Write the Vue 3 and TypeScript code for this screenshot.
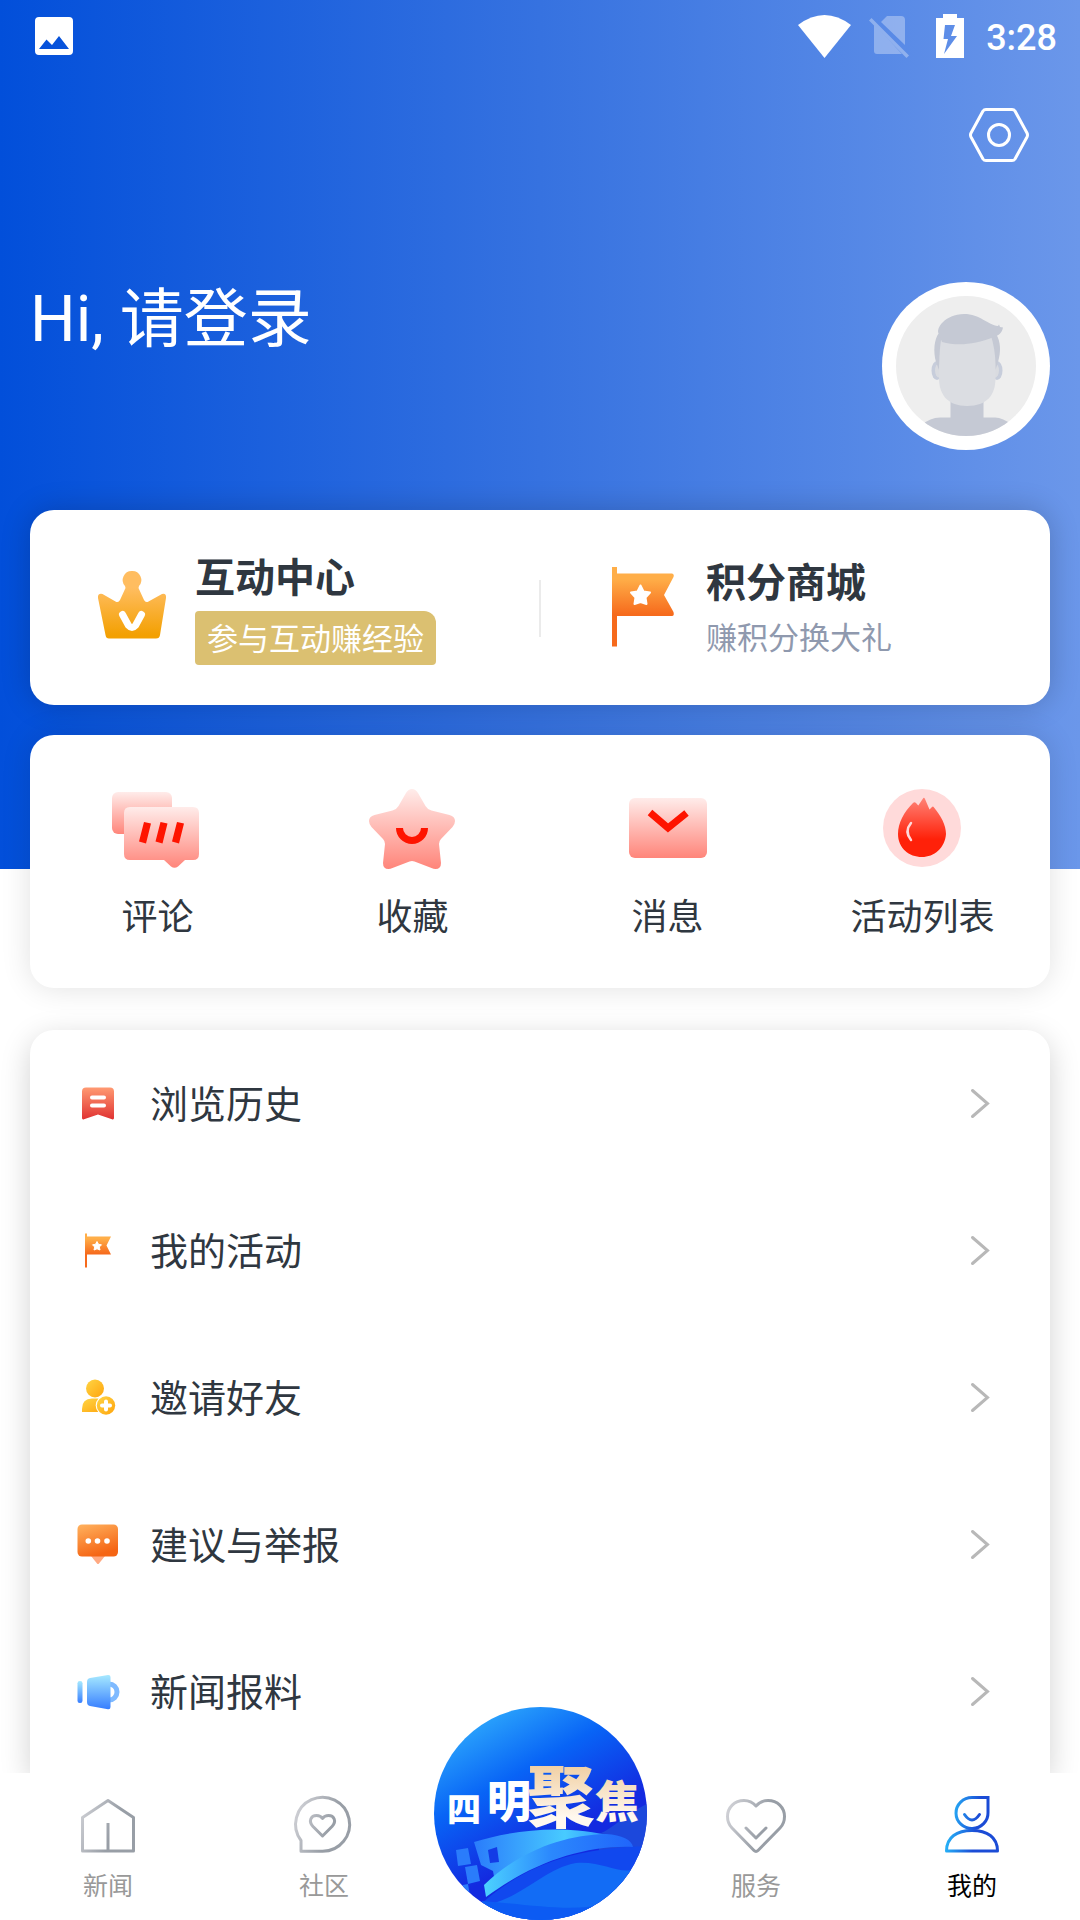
<script setup lang="ts">
type EntryIcon = 'comment' | 'favorite' | 'message' | 'activity'
type MenuIcon = 'history' | 'flag' | 'invite' | 'feedback' | 'report'
type TabIcon = 'home' | 'community' | 'service' | 'mine'

interface Entry {
  icon: EntryIcon
  label: string
}

interface MenuItem {
  icon: MenuIcon
  label: string
}

interface Tab {
  icon: TabIcon
  label: string
}

const entries: Entry[] = [
  { icon: 'comment', label: '评论' },
  { icon: 'favorite', label: '收藏' },
  { icon: 'message', label: '消息' },
  { icon: 'activity', label: '活动列表' },
]

const menu: MenuItem[] = [
  { icon: 'history', label: '浏览历史' },
  { icon: 'flag', label: '我的活动' },
  { icon: 'invite', label: '邀请好友' },
  { icon: 'feedback', label: '建议与举报' },
  { icon: 'report', label: '新闻报料' },
]

const leftTabs: Tab[] = [
  { icon: 'home', label: '新闻' },
  { icon: 'community', label: '社区' },
]

const rightTabs: Tab[] = [
  { icon: 'service', label: '服务' },
  { icon: 'mine', label: '我的' },
]
</script>

<template>
  <div class="screen">
    <!-- shared gradients -->
    <svg class="defs" aria-hidden="true">
      <defs>
        <linearGradient id="g-crown" x1="0" y1="0" x2="0" y2="1">
          <stop offset="0.25" stop-color="#ffbd60" />
          <stop offset="0.95" stop-color="#f3a002" />
        </linearGradient>
        <linearGradient id="g-flag" x1="0" y1="0" x2="0" y2="1">
          <stop offset="0.15" stop-color="#ffae48" />
          <stop offset="0.6" stop-color="#f66a1c" />
        </linearGradient>
        <linearGradient id="g-pink" x1="0" y1="0" x2="0" y2="1">
          <stop offset="0" stop-color="#ffecea" />
          <stop offset="1" stop-color="#ff857a" />
        </linearGradient>
        <linearGradient id="g-fire" x1="0" y1="0" x2="0" y2="1">
          <stop offset="0" stop-color="#ff8276" />
          <stop offset="0.7" stop-color="#ff2109" />
        </linearGradient>
        <linearGradient id="g-red" x1="0" y1="0" x2="0" y2="1">
          <stop offset="0" stop-color="#ff9a72" />
          <stop offset="1" stop-color="#e03232" />
        </linearGradient>
        <linearGradient id="g-gold" x1="0" y1="0" x2="1" y2="1">
          <stop offset="0" stop-color="#ffd545" />
          <stop offset="1" stop-color="#ffa40c" />
        </linearGradient>
        <linearGradient id="g-orange" x1="0" y1="0" x2="0.4" y2="1">
          <stop offset="0" stop-color="#ffb25e" />
          <stop offset="1" stop-color="#f56514" />
        </linearGradient>
        <linearGradient id="g-blue" x1="0" y1="0" x2="0" y2="1">
          <stop offset="0" stop-color="#a6e9ff" />
          <stop offset="1" stop-color="#377eff" />
        </linearGradient>
        <linearGradient id="g-tab" gradientUnits="userSpaceOnUse" x1="0" y1="20" x2="48" y2="38">
          <stop offset="0" stop-color="#cfd0d5" />
          <stop offset="0.75" stop-color="#989ea6" />
        </linearGradient>
        <linearGradient id="g-tab-on" gradientUnits="userSpaceOnUse" x1="6" y1="28" x2="44" y2="34">
          <stop offset="0" stop-color="#27b6f8" />
          <stop offset="0.75" stop-color="#1b4cd6" />
        </linearGradient>
      </defs>
    </svg>

    <main class="content">
      <div class="status">
        <svg class="status-image" width="38" height="38" viewBox="0 0 38 38" aria-hidden="true">
          <path fill="#fff" fill-rule="evenodd" d="M4 0H34Q38 0 38 4V34Q38 38 34 38H4Q0 38 0 34V4Q0 0 4 0ZM4 32H34L24 19L17 28L11.500 22.500Z" />
        </svg>
        <svg width="53" height="43" viewBox="0 0 53 43" aria-hidden="true">
          <path fill="#fff" d="M0 10Q26.500 -10 53 10L26.500 43Z" />
        </svg>
        <svg width="40" height="44" viewBox="0 0 40 44" aria-hidden="true">
          <g fill="#fff" opacity="0.33">
            <path d="M18 2H32Q36 2 36 6V31L12 8Z" />
            <path d="M5 10L33 40H8Q5 40 5 37Z" />
            <path d="M2.500 4L40 41.500L37.500 44L0 6.500Z" />
          </g>
        </svg>
        <svg width="41" height="44" viewBox="0 0 41 44" aria-hidden="true">
          <path fill="#fff" fill-rule="evenodd" d="M16 0H30V4H37V44H9V4H16ZM18 11L16.500 25H21L17 40L30 22H24L28 11Z" />
        </svg>
        <span class="clock">3:28</span>
      </div>

      <div class="tools">
        <button class="settings" type="button" aria-label="设置">
          <svg width="60" height="60" viewBox="0 0 60 60" fill="none" stroke="#fff" stroke-width="3" stroke-linejoin="round">
            <path d="M17 4.500H43Q45 4.500 46 6L58 28Q59 30 58 32L46 54Q45 55.500 43 55.500H17Q15 55.500 14 54L2 32Q1 30 2 28L14 6Q15 4.500 17 4.500Z" />
            <circle cx="30" cy="30" r="10.500" />
          </svg>
        </button>
      </div>

      <section class="profile">
        <a class="greeting" href="#login">Hi, 请登录</a>
        <a class="avatar" href="#profile" aria-label="头像">
          <svg width="168" height="168" viewBox="0 0 168 168">
            <clipPath id="avatar-clip"><circle cx="84" cy="84" r="70" /></clipPath>
            <circle cx="84" cy="84" r="84" fill="#fff" />
            <circle cx="84" cy="84" r="70" fill="#eee" />
            <g clip-path="url(#avatar-clip)">
              <path fill="#c5c9d4" d="M40 143Q48 135.500 58 135.500H68.500V116H101.500V135.500H113Q121 135.500 130 143V160H40Z" />
            </g>
            <ellipse cx="55" cy="88.500" rx="5.500" ry="9.500" fill="#c7cddb" />
            <ellipse cx="115" cy="88.500" rx="5.500" ry="9.500" fill="#c7cddb" />
            <ellipse cx="57" cy="88.500" rx="4" ry="7" fill="#d9dbe0" />
            <ellipse cx="113" cy="88.500" rx="4" ry="7" fill="#d9dbe0" />
            <path fill="#c5c9d4" d="M57 51C52 57 51 70 54 80L57 88L61 58ZM114 52C119 60 119 70 116 80L113.500 88L108 56Z" />
            <path fill="#dbdde2" d="M59 58Q57 70 57 96C57 113 66 124 85 124C105 124 113.500 113 113.500 96V82Q113 66 109 54Z" />
            <path fill="#c5c9d4" d="M57 52C53 47 63 32 82 32C98 32 106 43 116 44L117 42.500L118 45L121 45.500C120 51 116 54 112 55C92 63 75 64 60 60Z" />
          </svg>
        </a>
      </section>

      <section class="card promos">
        <a class="promo" href="#interact">
          <svg width="68" height="88" viewBox="0 0 68 88" aria-hidden="true">
            <path fill="url(#g-crown)" d="M34 6A9 9 0 0 1 41 21L40.500 23L46 35Q47.500 38 50.500 36.500L64 29Q68.500 28 68 33L62 70Q61.500 73.500 58 73.500H11Q8 73.500 7.500 70L0 33Q-0.500 28 4.500 29L17.500 36.500Q20.500 38 22 35L27.500 23L27 21A9 9 0 0 1 34 6Z" />
            <path fill="none" stroke="#fff" stroke-width="7" stroke-linecap="round" stroke-linejoin="round" d="M24.500 49.500L30.500 60.500Q34 64.500 37.500 60.500L43.500 49.500" />
          </svg>
          <span class="promo-text">
            <strong class="promo-title">互动中心</strong>
            <span class="promo-badge">参与互动赚经验</span>
          </span>
        </a>
        <span class="divider"></span>
        <a class="promo" href="#mall">
          <svg width="68" height="88" viewBox="0 0 68 88" aria-hidden="true">
            <path fill="url(#g-flag)" d="M3 2H8V8.500H63Q65.500 9 64.500 12L55 30L64.500 47Q65.500 51 63 51H8V81.500H3Z" />
            <path fill="#fff" stroke="#fff" stroke-width="2" stroke-linejoin="round" d="M31.500 20.500L34.500 26.500L41 27.500L36.500 32.500L37.500 39L31.500 37L25.500 39L26.500 32.500L22 27.500L28.500 26.500Z" />
          </svg>
          <span class="promo-text">
            <strong class="promo-title">积分商城</strong>
            <span class="promo-note">赚积分换大礼</span>
          </span>
        </a>
      </section>

      <section class="card entries">
        <a v-for="entry in entries" :key="entry.label" class="entry" :href="`#${entry.icon}`">
          <svg width="90" height="84" viewBox="0 0 90 84" aria-hidden="true">
            <g v-if="entry.icon === 'comment'">
              <rect x="-1" y="4" width="60" height="42" rx="6" fill="url(#g-pink)" />
              <path fill="url(#g-pink)" d="M17 19H80Q86 19 86 25V66Q86 72 80 72H72L65 78.500Q61.500 81 58 78.500L51 72H17Q11 72 11 66V25Q11 19 17 19Z" />
              <path fill="#fe1400" d="M31 34L38 35.500L33 55.500L26 53.500ZM47.500 34L54.500 35.500L49.500 55.500L42.500 53.500ZM64 34L71 35.500L66 55.500L59 53.500Z" />
            </g>
            <g v-else-if="entry.icon === 'favorite'">
              <path fill="url(#g-pink)" d="M44 1Q47.500 1 50 5L57.500 18Q59.500 21.500 63.500 22.500L81.500 27Q87 28.500 87 33Q87 36 84.500 39L73 51Q71 53 71 56L73 75Q73 81 67.500 81Q65.500 81 63.500 80L46.500 73.500Q44 72.500 41.500 73.500L24.500 80Q22.500 81 20.500 81Q15 81 15 75L17 56Q17 53 15 51L3.500 39Q1 36 1 33Q1 28.500 6.500 27L24.500 22.500Q28.500 21.500 30.500 18L38 5Q40.500 1 44 1Z" />
              <path fill="none" stroke="#fe1400" stroke-width="7" d="M31.500 40A12.500 12.500 0 0 0 56.500 40" />
            </g>
            <g v-else-if="entry.icon === 'message'">
              <rect x="6" y="10" width="78" height="60" rx="6" fill="url(#g-pink)" />
              <path fill="none" stroke="#fe1400" stroke-width="7" d="M27 24.500L45 40L63.500 25" />
            </g>
            <g v-else>
              <circle cx="44" cy="40" r="39" fill="#ffdada" />
              <path fill="url(#g-fire)" d="M35 15Q36.500 13.500 38 15L40.300 17.500L45 10.500Q46 9 47 11L51.500 21.500L54 19Q55 18 56 19.500C63 28 68 37 68 46C67 60 56 69 44 69C31 69 20 60 20 46C20 35 26 24 35 15Z" />
              <path fill="none" stroke="#ffdada" stroke-width="2.500" stroke-linecap="round" d="M33 35Q26 43.500 33 52" />
            </g>
          </svg>
          <span class="entry-label">{{ entry.label }}</span>
        </a>
      </section>

      <nav class="card menu" aria-label="菜单">
        <a v-for="item in menu" :key="item.label" class="menu-item" :href="`#${item.icon}`">
          <svg width="44" height="44" viewBox="0 0 44 44" aria-hidden="true">
            <g v-if="item.icon === 'history'">
              <path fill="url(#g-red)" d="M10 5.500H34Q38 5.500 38 9.500V36Q38 38 36 37.300L22 32.500L8 37.300Q6 38 6 36V9.500Q6 5.500 10 5.500Z" />
              <path stroke="#fff" stroke-width="4" stroke-linecap="round" d="M16 15.500H28M16 23.500H28" />
            </g>
            <g v-else-if="item.icon === 'flag'">
              <path fill="url(#g-flag)" d="M9 4.500H11V7.500H35L30.500 16.500L35 25.500H11V38.500H9Z" />
              <path fill="#fff" stroke="#fff" stroke-linejoin="round" d="M21 12.500L22.500 15.300L25.500 15.800L23.300 18L24 21L21 19.800L18 21L18.700 18L16.500 15.800L19.500 15.300Z" />
            </g>
            <g v-else-if="item.icon === 'invite'">
              <circle cx="19" cy="12.500" r="9" fill="url(#g-gold)" />
              <path fill="url(#g-gold)" d="M6 36V33Q6 22.500 16 22.500H32V36Z" />
              <circle cx="30" cy="29.500" r="10.300" fill="#fff" />
              <circle cx="30" cy="29.500" r="9.200" fill="url(#g-gold)" />
              <path stroke="#fff" stroke-width="4" stroke-linecap="round" d="M30 25.500V33.500M26 29.500H34" />
            </g>
            <g v-else-if="item.icon === 'feedback'">
              <path fill="#ffa981" d="M15 33H29L23 40.500Q22 41.500 21 40.500Z" />
              <rect x="1.500" y="1.500" width="40.500" height="32" rx="4.500" fill="url(#g-orange)" />
              <circle cx="12.300" cy="18" r="2.800" fill="#fff" />
              <circle cx="21.500" cy="18" r="2.800" fill="#fff" />
              <circle cx="31" cy="18" r="2.800" fill="#fff" />
            </g>
            <g v-else>
              <rect x="1.500" y="11" width="5" height="22" rx="2.300" fill="url(#g-blue)" />
              <path fill="none" stroke="#7fbaff" stroke-width="5" d="M33 14A8 8 0 0 1 33 30" />
              <path fill="url(#g-blue)" d="M14 8L32 5Q34.500 4.800 34.500 7V37Q34.500 39.500 32 39.200L14 36Q11 35.500 11 32V12Q11 8.500 14 8Z" />
            </g>
          </svg>
          <span class="menu-label">{{ item.label }}</span>
          <svg width="24" height="36" viewBox="0 0 24 36" aria-hidden="true">
            <path fill="none" stroke="#b8b8b8" stroke-width="3" stroke-linecap="round" d="M4.500 4.500L19.500 17.500L4.500 30.500" />
          </svg>
        </a>
      </nav>
    </main>

    <nav class="tabbar" aria-label="主导航">
      <a v-for="tab in leftTabs" :key="tab.label" class="tab" :href="`#${tab.icon}`">
        <svg width="60" height="60" viewBox="0 0 60 60" fill="none" stroke="url(#g-tab)" stroke-width="3" stroke-linejoin="round" stroke-linecap="round" aria-hidden="true">
          <g v-if="tab.icon === 'home'">
            <path d="M30 6.500L55.500 23.500V57H4.500V23.500Z" />
            <path stroke-linecap="butt" d="M30 29V57" />
          </g>
          <g v-else>
            <path d="M7 57.300V46.500A27 27 0 1 1 28.500 57.300Z" />
            <path d="M28.500 42L19 32.500C14 27 17 21.500 22.500 21.500Q26.500 21.500 28.500 24.500Q30.500 21.500 34.500 21.500C40 21.500 43 27 38 32.500Z" />
          </g>
        </svg>
        <span class="tab-label">{{ tab.label }}</span>
      </a>

      <a class="brand" href="#brand">
        <svg width="213" height="213" viewBox="0 0 213 213" role="img" aria-label="四明聚焦">
          <defs>
            <linearGradient id="b-bg" x1="0.2" y1="0.05" x2="0.6" y2="0.75">
              <stop offset="0" stop-color="#2ca6fc" />
              <stop offset="0.4" stop-color="#0864f6" />
              <stop offset="0.85" stop-color="#132ae0" />
            </linearGradient>
            <linearGradient id="b-sail" x1="0" y1="0" x2="1" y2="0">
              <stop offset="0" stop-color="#2a7cfb" />
              <stop offset="0.65" stop-color="#48cbff" />
              <stop offset="1" stop-color="#2b8dff" />
            </linearGradient>
            <linearGradient id="b-ribbon" x1="0" y1="0" x2="1" y2="0">
              <stop offset="0" stop-color="#4cd2ff" />
              <stop offset="0.45" stop-color="#2b88fd" />
              <stop offset="1" stop-color="#2065fb" />
            </linearGradient>
            <linearGradient id="b-gold" x1="0" y1="0" x2="0" y2="1">
              <stop offset="0.2" stop-color="#f0cd9f" />
              <stop offset="0.75" stop-color="#fff8ef" />
            </linearGradient>
            <clipPath id="b-clip"><circle cx="106.500" cy="106.500" r="106.500" /></clipPath>
          </defs>
          <g clip-path="url(#b-clip)">
            <rect width="213" height="213" fill="url(#b-bg)" />
            <path fill="#1c48dc" d="M165 127C180 121 190 108 213 97V150H165Z" />
            <path fill="#1148ee" d="M48 196C95 155 145 141 213 139V213H48Z" />
            <path fill="#126cf5" d="M40 200C88 195 105 163 142 156C168 154 180 166 200 163L213 158V213H40Z" />
            <path fill="#0c5bf3" d="M48 194C100 198 140 206 175 196L150 213H50Z" />
            <path fill="url(#b-sail)" d="M40 135C75 124 130 116 180 130L140 140L61 175L59 164L47 158Z" />
            <path fill="url(#b-ribbon)" d="M50 178C85 144 130 128 172 127C188 128 198 133 199 140C150 138 98 156 52 190Z" />
            <path fill="#133be6" d="M54 143L63 140L65 155L56 156Z" />
            <path fill="#2a7cfb" d="M22 143L34 141L37 157L24 159ZM31 160L43 158L46 174L34 177ZM29 178L34 177L37 195L29 188Z" />
          </g>
          <text class="brand-text" fill="#fff">
            <tspan x="13" y="115" font-size="34">四</tspan>
            <tspan x="53" y="111" font-size="44">明</tspan>
            <tspan x="93" y="115" font-size="68" fill="url(#b-gold)">聚</tspan>
            <tspan x="161" y="111" font-size="44" fill="url(#b-gold)">焦</tspan>
          </text>
        </svg>
      </a>

      <a
        v-for="tab in rightTabs"
        :key="tab.label"
        class="tab"
        :class="{ active: tab.icon === 'mine' }"
        :href="`#${tab.icon}`"
      >
        <svg width="60" height="60" viewBox="0 0 60 60" fill="none" stroke-width="3" stroke-linejoin="round" stroke-linecap="round" aria-hidden="true">
          <g v-if="tab.icon === 'service'" stroke="url(#g-tab)">
            <path d="M30 12C26.500 8 22.500 6.500 18 6.500C8.500 6.500 1.500 13.500 1.500 22.500C1.500 27 3 31 6 34L28 56.500Q30 58.500 32 56.500L54 34C57 31 58.500 27 58.500 22.500C58.500 13.500 51.500 6.500 42 6.500C37.500 6.500 33.500 8 30 12Z" />
            <path d="M20 34L30 44L40 34" />
          </g>
          <g v-else stroke="url(#g-tab-on)">
            <path stroke-linejoin="miter" d="M46 3.500V18.500A16 15.500 0 1 1 30 3.500Z" />
            <path d="M22.500 20.500Q30 31.500 37.500 20.500" />
            <path d="M4.500 57C4.500 43 15 36.500 30 36.500C45 36.500 55.500 43 55.500 57Z" />
          </g>
        </svg>
        <span class="tab-label">{{ tab.label }}</span>
      </a>
    </nav>
  </div>
</template>

<style>
body {
  margin: 0;
  background: #fff;
}
</style>

<style scoped>
.screen {
  display: flex;
  flex-direction: column;
  height: 100vh;
  background: #fff;
  color: #2f3740;
  font-family: Roboto, 'Noto Sans CJK SC', sans-serif;
}

.screen * {
  box-sizing: border-box;
}

a {
  color: inherit;
  text-decoration: none;
}

svg {
  display: block;
  flex: none;
  overflow: visible;
}

.defs {
  width: 0;
  height: 0;
}

.content {
  display: flex;
  flex: 1;
  flex-direction: column;
  min-height: 0;
  overflow-x: hidden;
  overflow-y: auto;
  padding: 0 30px;
  background: linear-gradient(90deg, #024fda 0%, #3672e0 50%, #6b97ea 100%) no-repeat top / 100% 869px;
}

.status {
  display: flex;
  flex: none;
  align-items: center;
  gap: 18px;
  height: 72px;
  margin: 0 -7px 0 5px;
}

.status-image {
  margin-right: auto;
}

.clock {
  padding-top: 4px;
  color: #fff;
  font-size: 36px;
  font-weight: 500;
  line-height: 48px;
}

.tools {
  display: flex;
  flex: none;
  align-items: center;
  justify-content: flex-end;
  height: 126px;
  padding-right: 21px;
}

.settings {
  padding: 0;
  border: 0;
  background: none;
  cursor: pointer;
}

.profile {
  display: flex;
  flex: none;
  align-items: flex-start;
  justify-content: space-between;
  margin-top: 84px;
}

.greeting {
  color: #fff;
  font-size: 64px;
  line-height: 76px;
}

.avatar {
  border-radius: 50%;
}

.card {
  flex: none;
  border-radius: 24px;
  background: #fff;
}

.promos {
  display: flex;
  align-items: center;
  height: 195px;
  margin-top: 60px;
  padding-top: 2px;
  box-shadow: 0 0 30px rgba(0, 0, 0, 0.2);
}

.promo {
  display: flex;
  flex: 1;
  align-items: center;
  gap: 29px;
  padding-left: 68px;
}

.promo-text {
  display: flex;
  flex-direction: column;
  align-items: flex-start;
  gap: 6px;
}

.promo-title {
  font-size: 40px;
  font-weight: 700;
  line-height: 52px;
}

.promo-badge {
  padding: 3px 12px 0;
  border-radius: 4px 12px 4px 4px;
  background: #dbc071;
  color: #fff;
  font-size: 31px;
  line-height: 51px;
}

.promo-note {
  padding-top: 2px;
  color: #8f99ae;
  font-size: 31px;
  line-height: 42px;
}

.divider {
  width: 2px;
  height: 57px;
  background: #ebebeb;
}

.entries {
  display: grid;
  grid-template-columns: repeat(4, 1fr);
  margin-top: 30px;
  padding: 53px 0 46px;
  box-shadow: 0 0 30px rgba(0, 0, 0, 0.12);
}

.entry {
  display: flex;
  flex-direction: column;
  align-items: center;
  gap: 22px;
}

.entry-label {
  font-size: 36px;
  line-height: 48px;
}

.menu {
  flex: 1 0 auto;
  margin-top: 42px;
  border-radius: 24px 24px 0 0;
  box-shadow: 0 8px 30px rgba(0, 0, 0, 0.18);
}

.menu-item {
  display: flex;
  align-items: center;
  height: 147px;
  padding: 0 58px 0 46px;
}

.menu-label {
  flex: 1;
  padding: 2px 0 0 30px;
  font-size: 38px;
  line-height: 56px;
}

.tabbar {
  position: relative;
  z-index: 1;
  display: grid;
  flex: none;
  grid-template-rows: 147px;
  grid-template-columns: repeat(5, 1fr);
  height: 147px;
  background: #fff;
}

.tab {
  display: flex;
  flex-direction: column;
  align-items: center;
  gap: 15px;
  padding-top: 21px;
  color: #999;
}

.tab.active {
  color: #000;
}

.tab-label {
  font-size: 25px;
  line-height: 36px;
}

.brand {
  align-self: end;
  justify-self: center;
}

.brand-text {
  font-family: 'Noto Sans CJK SC', sans-serif;
  font-weight: 900;
}
</style>
